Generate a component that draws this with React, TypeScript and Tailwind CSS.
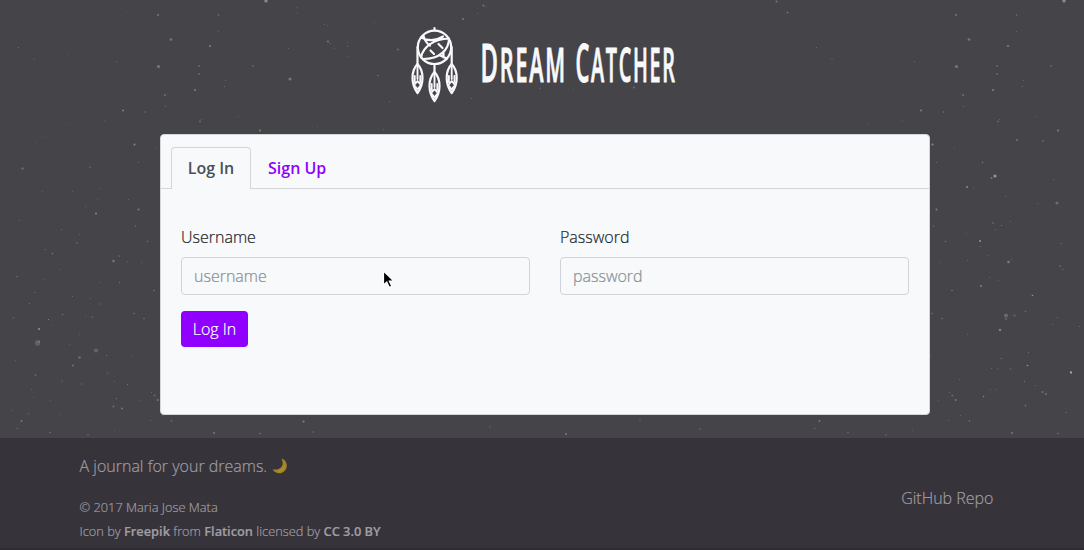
import React from "react";

// x, y, size, opacity of the dust specks within one 798px wide tile
const specks: [number, number, number, number][] = [
  [266, 1, 3, 0.45], [158, 15, 2, 0.3], [218.5, 15, 1.5, 0.3], [297, 7.5, 1, 0.25], [297, 13, 1, 0.2],
  [127, 12, 1, 0.1], [171, 39.5, 2.5, 0.3], [210, 46, 2, 0.35], [218.5, 31.5, 1, 0.25], [158.5, 66.5, 3, 0.3],
  [199, 66, 2, 0.2], [199, 74, 2, 0.2], [253, 66, 1.5, 0.3], [290, 79, 3, 0.3], [225.5, 80.5, 1, 0.25],
  [224.5, 86.5, 1, 0.35], [195, 90, 2, 0.35], [165, 95, 2, 0.25], [165.5, 106.5, 1, 0.35], [123, 110.5, 2, 0.35],
  [145.5, 112, 1.5, 0.3], [18.5, 47.5, 1, 0.3], [34, 59, 1.5, 0.15], [116.5, 61.5, 1, 0.3], [68.5, 54.5, 1, 0.15],
  [324.5, 24.5, 1, 0.25], [327.5, 25.5, 1, 0.2], [328, 41.5, 2, 0.3], [330.5, 43.5, 1, 0.3], [334.5, 48.5, 1, 0.25],
  [288.5, 48.5, 1, 0.25], [347.5, 42.5, 1, 0.2], [347.5, 46.5, 1, 0.3], [348.5, 56.5, 1, 0.2], [374.5, 22.5, 1, 0.2],
  [378, 75.5, 1.5, 0.3], [389.5, 101.5, 1, 0.3], [398, 49.5, 2, 0.25], [260, 130.5, 2, 0.35], [238.5, 116.5, 1, 0.25],
  [317.5, 126.5, 1, 0.2], [383.5, 129.5, 1, 0.25], [200, 121.5, 2, 0.2], [201.5, 119.5, 1, 0.25], [104.5, 120.5, 1, 0.15],
  [69.5, 124.5, 1, 0.15], [134.5, 144.5, 2, 0.4], [156.5, 147.5, 1, 0.2], [138.5, 162.5, 1, 0.3], [22.5, 168.5, 2.5, 0.2],
  [90, 167.5, 2, 0.15], [42.5, 136.5, 1, 0.15], [36.5, 142.5, 1, 0.15], [100.5, 188.5, 1, 0.25], [97.5, 199, 1, 0.25],
  [72.5, 191.5, 1, 0.2], [42.5, 191.5, 1, 0.2], [128.5, 199.5, 1, 0.25], [138.5, 209.5, 2, 0.35], [96, 213.5, 2, 0.4],
  [85.5, 206.5, 1, 0.25], [19.5, 220.5, 1, 0.3], [61.5, 229.5, 1, 0.3], [135.5, 226, 1.5, 0.25], [79.5, 234.5, 1, 0.2],
  [77, 243, 1.5, 0.25], [147.5, 241.5, 1.5, 0.25], [45, 249.5, 1.5, 0.15], [52.5, 253.5, 1.5, 0.3], [113.5, 261, 2.5, 0.3],
  [119, 256, 1.5, 0.25], [127.5, 261.5, 1, 0.25], [141.5, 262.5, 1, 0.25], [59.5, 269.5, 1, 0.2], [17, 276.5, 1.5, 0.25],
  [43.5, 279.5, 1, 0.2], [119.5, 282.5, 1, 0.4], [99.5, 282.5, 1, 0.2], [34.5, 292.5, 1, 0.35], [72.5, 296.5, 1, 0.3],
  [90.5, 298.5, 1, 0.25], [99.5, 304, 1.5, 0.2], [29.5, 303.5, 1, 0.35], [62.5, 314.5, 1.5, 0.25], [85.5, 315.5, 1, 0.2],
  [92.5, 317, 1.5, 0.25], [134, 313.5, 1.5, 0.25], [13.5, 318, 1.5, 0.2], [48.5, 319.5, 1, 0.5], [144, 318.5, 1.5, 0.3],
  [39, 329, 2, 0.45], [52.5, 325.5, 1, 0.15], [79.5, 334.5, 1, 0.2], [37.5, 343, 5, 0.18], [39, 341.5, 2, 0.25],
  [96, 350.5, 4, 0.2], [69.5, 344.5, 1, 0.2], [79.5, 357.5, 2.5, 0.25], [106.5, 355.5, 1, 0.4], [132.5, 356.5, 1, 0.2],
  [73, 365.5, 2, 0.25], [15.5, 360.5, 1, 0.2], [107.5, 373, 1.5, 0.2], [35.5, 375, 1.5, 0.3], [62, 381, 1.5, 0.2],
  [81.5, 384, 1.5, 0.2], [127.5, 384.5, 1, 0.4], [114.5, 381.5, 1, 0.25], [31.5, 389.5, 1, 0.2], [33.5, 397.5, 1, 0.2],
  [50.5, 400.5, 1, 0.2], [116.5, 398.5, 1, 0.4], [113.5, 406.5, 2, 0.25], [122, 408.5, 2, 0.3], [154.5, 395.5, 2, 0.2],
  [157.5, 400, 1.5, 0.3], [140.5, 400.5, 1, 0.2], [12.5, 410.5, 1, 0.25], [28.5, 414, 1.5, 0.2], [21.5, 421, 2, 0.3],
  [17, 428.5, 1.5, 0.2], [50, 432.5, 1.5, 0.25], [60.5, 414.5, 1, 0.2], [88, 435, 1.5, 0.25], [114.5, 430.5, 1, 0.2],
  [150.5, 420.5, 1, 0.3], [171.5, 421, 1.5, 0.3], [463, 19, 2, 0.3], [477.5, 13.5, 1, 0.25], [483.5, 5.5, 2, 0.3],
  [486, 6.5, 1, 0.2], [471.5, 98.5, 1, 0.3], [540, 88.5, 1.5, 0.2], [573.5, 89.5, 1, 0.2], [634, 87.5, 2, 0.25],
  [776.5, 1.5, 2, 0.3], [787.5, 12.5, 1.5, 0.4], [214, 433, 2, 0.3], [260, 433.5, 1.5, 0.35], [313.5, 432, 1.5, 0.3],
  [566, 434, 2, 0.3], [303.5, 421.5, 2, 0.4], [700, 429, 1.5, 0.25], [640, 420, 1.5, 0.2], [490, 427, 1.5, 0.2],
  [197, 176, 3, 0.5], [193.5, 178, 2, 0.3], [169, 187, 2, 0.4], [175.5, 188.5, 1, 0.25], [184.5, 162.5, 1.5, 0.3],
  [219, 140, 2, 0.25], [245, 141, 2, 0.2], [255.5, 179.5, 1, 0.3], [259, 203, 3, 0.25], [207.5, 196.5, 1, 0.3],
  [240, 203.5, 1, 0.3], [195, 223, 2, 0.15], [203.5, 225.5, 1, 0.4], [197.5, 229.5, 1, 0.3], [212.5, 221.5, 1, 0.25],
  [182, 241, 2, 0.45], [182.5, 246.5, 1, 0.3], [168.5, 233.5, 1, 0.25], [263.5, 243.5, 1.5, 0.2], [210.5, 262, 2.5, 0.35],
  [213.5, 259.5, 1, 0.25], [189.5, 255.5, 1, 0.25], [169.5, 260.5, 1, 0.25], [262, 266, 2, 0.18], [265, 269.5, 1.5, 0.18],
  [191.5, 277.5, 1, 0.25], [200.5, 280.5, 1, 0.25], [183, 286, 2, 0.35], [154, 290.5, 1.5, 0.3], [234.5, 295.5, 1.5, 0.5],
  [208, 315.5, 4, 0.22], [208, 319, 2, 0.2], [216.5, 315.5, 2, 0.2], [227.5, 311.5, 1.5, 0.25], [259.5, 317.5, 1, 0.35],
  [254.5, 324.5, 1, 0.3], [281.5, 326.5, 1, 0.3], [202, 330, 2.2, 0.4], [169.5, 334.5, 1, 0.25], [230.5, 352.5, 1, 0.4],
  [203.5, 358.5, 1.5, 0.2], [229.5, 365.5, 1.5, 0.5], [273, 372.5, 2.2, 0.6], [193.5, 368.5, 1, 0.25], [199.5, 368.5, 1, 0.25],
  [212.5, 369, 1.5, 0.2], [161.5, 379.5, 1, 0.25], [226.5, 381.5, 1, 0.4], [237.5, 385.5, 1, 0.3], [244.5, 392, 2, 0.25],
  [248, 394, 2, 0.25], [192.5, 389.5, 1, 0.25], [198.5, 389.5, 1, 0.25], [185.5, 396.5, 1.5, 0.4], [151.5, 392.5, 1, 0.3],
  [158, 400, 1.5, 0.25], [227.5, 405.5, 1.5, 0.35], [268, 412.5, 1.5, 0.2], [162.5, 415.5, 1, 0.25],
];

function Dust() {
  return (
    <svg className="pointer-events-none absolute inset-0 h-[438px] w-full" aria-hidden="true">
      <defs>
        <pattern id="dust" width="798" height="438" patternUnits="userSpaceOnUse">
          {specks.map(([x, y, s, o], i) => (
            <circle key={i} cx={x} cy={y} r={s * 0.53} fill="#fff" opacity={o * 0.85} />
          ))}
        </pattern>
      </defs>
      <rect width="100%" height="100%" fill="url(#dust)" />
    </svg>
  );
}

function Feather({ x, y }: { x: number; y: number }) {
  return (
    <g transform={`translate(${x} ${y})`}>
      <path d="M0 0C-3.4 3.5-5 8-5 14c0 6.5 2 11 5 15C3 25 5 20.5 5 14 5 8 3.4 3.5 0 0Z" />
      <path d="M0 1v14M-2.8 12v6M2.8 12v6M0 17l3.3 4L0 25.5l-3.3-4.5Z" strokeWidth="1.9" />
    </g>
  );
}

function DreamCatcherIcon() {
  return (
    <svg
      className="h-[78px] w-[48px] shrink-0"
      viewBox="0 0 48 78"
      fill="none"
      stroke="#f8f9fb"
      strokeWidth="2.2"
      strokeLinecap="round"
      strokeLinejoin="round"
      aria-hidden="true"
    >
      <path d="M23.5 2v2M6.5 21v17M40.7 21v17M23.5 38v8" />
      <circle cx="23.5" cy="21.3" r="16.7" />
      <path d="M10 11.5c7 3.5 15 3.5 22-1M12.5 10c1.500 5 4 8 6.500 9.500M38 12.500C24 13 12 20 10 31.500M38 12.500c0 11-9 20.500-26 20.500M19.500 24.500l3.500 3.500M27.500 18l4 4M29 29.500l7 3M32.500 26.500v5" />
      <Feather x={6.5} y={38} />
      <Feather x={23.5} y={46} />
      <Feather x={40.7} y={38} />
    </svg>
  );
}

function Wordmark() {
  return (
    <svg
      className="h-[80px] w-[220px] overflow-visible"
      viewBox="480 26 220 80"
      fill="#f8f9fb"
      stroke="#f8f9fb"
      strokeWidth="1"
      strokeLinejoin="round"
      role="heading"
      aria-level={1}
    >
      <g fontFamily="'Open Sans', sans-serif" fontWeight="600" letterSpacing="4">
        <text x="480.5" y="82" fontSize="52" textLength="86.5" lengthAdjust="spacingAndGlyphs">
          D<tspan fontSize="47">REAM</tspan>
        </text>
        <text x="575.5" y="82" fontSize="52" textLength="101" lengthAdjust="spacingAndGlyphs">
          C<tspan fontSize="47">ATCHER</tspan>
        </text>
      </g>
    </svg>
  );
}

function Field({ label, type }: { label: string; type: string }) {
  return (
    <label className="flex flex-col gap-2 text-[#212529]">
      <span>{label}</span>
      <input
        type={type}
        placeholder={label.toLowerCase()}
        className="h-[38px] w-full rounded border border-[#ced4da] bg-transparent px-3 outline-none placeholder:text-[#868e96]"
      />
    </label>
  );
}

function Moon() {
  return (
    <svg className="h-4 w-4" viewBox="0 0 16 16" aria-hidden="true">
      <path d="M9.5.4A7.6 7.6 0 1 1 .5 11.2C8 13 13 8 9.5.4Z" fill="#a08328" />
      <path d="M11.6 3c2.6 5-1.3 10.4-7.5 10.2C10 15 15.2 9 11.6 3Z" fill="#b79c3b" />
    </svg>
  );
}

export default function App() {
  return (
    <div className="relative flex h-[550px] w-full flex-col overflow-hidden bg-[#454449] font-['Open_Sans',sans-serif] text-base font-light [-webkit-text-stroke:0.2px]">
      <Dust />
      <header className="relative flex h-[134px] items-start pl-[411px] pt-[26px]">
        <DreamCatcherIcon />
        <div className="pl-[21px]">
          <Wordmark />
        </div>
      </header>

      <main className="relative ml-[160px] h-[281px] w-[770px] rounded border border-[#d4d6d9] bg-[#f8f9fb]">
        <nav className="flex h-[54px] items-end border-b border-[#d4d6d9] px-[10px] font-semibold [-webkit-text-stroke:0]">
          <button className="-mb-px h-[42px] w-[80px] rounded-t border border-b-0 border-[#d4d6d9] bg-[#f8f9fb] pb-[2px] text-[#495057]">
            Log In
          </button>
          <button className="h-[41px] px-[17px] text-[#8f00ff]">Sign Up</button>
        </nav>
        <form className="px-5 pt-[36px]">
          <div className="grid grid-cols-2 gap-[30px]">
            <Field label="Username" type="text" />
            <Field label="Password" type="password" />
          </div>
          <button type="button" className="mt-4 h-9 w-[67px] rounded bg-[#8f00ff] text-white">
            Log In
          </button>
        </form>
      </main>

      <footer className="relative mt-[23px] flex h-[112px] justify-between border-b-2 border-[#2f2c33] bg-[#37333a] pl-[79.5px] pr-[90.5px] text-[#a09da2]">
        <div className="pt-4">
          <p className="flex items-center gap-[5px] leading-6">
            A journal for your dreams. <Moon />
          </p>
          <div className="mt-[17px] text-[12.8px] leading-6">
            <p>© 2017 Maria Jose Mata</p>
            <p>
              Icon by <b className="font-semibold">Freepik</b> from <b className="font-semibold">Flaticon</b> licensed by{" "}
              <b className="font-semibold">CC 3.0 BY</b>
            </p>
          </div>
        </div>
        <a className="pt-12 leading-6">GitHub Repo</a>
      </footer>

      <svg className="absolute left-[382px] top-[269px] h-[20px] w-[14px]" viewBox="0 0 14 20" aria-hidden="true">
        <path d="M1.5 2v14l3.3-3.1 2.5 5.5 2.5-1.1-2.5-5.3h4.5Z" fill="#000" stroke="#fff" strokeWidth="1.2" />
      </svg>
    </div>
  );
}
